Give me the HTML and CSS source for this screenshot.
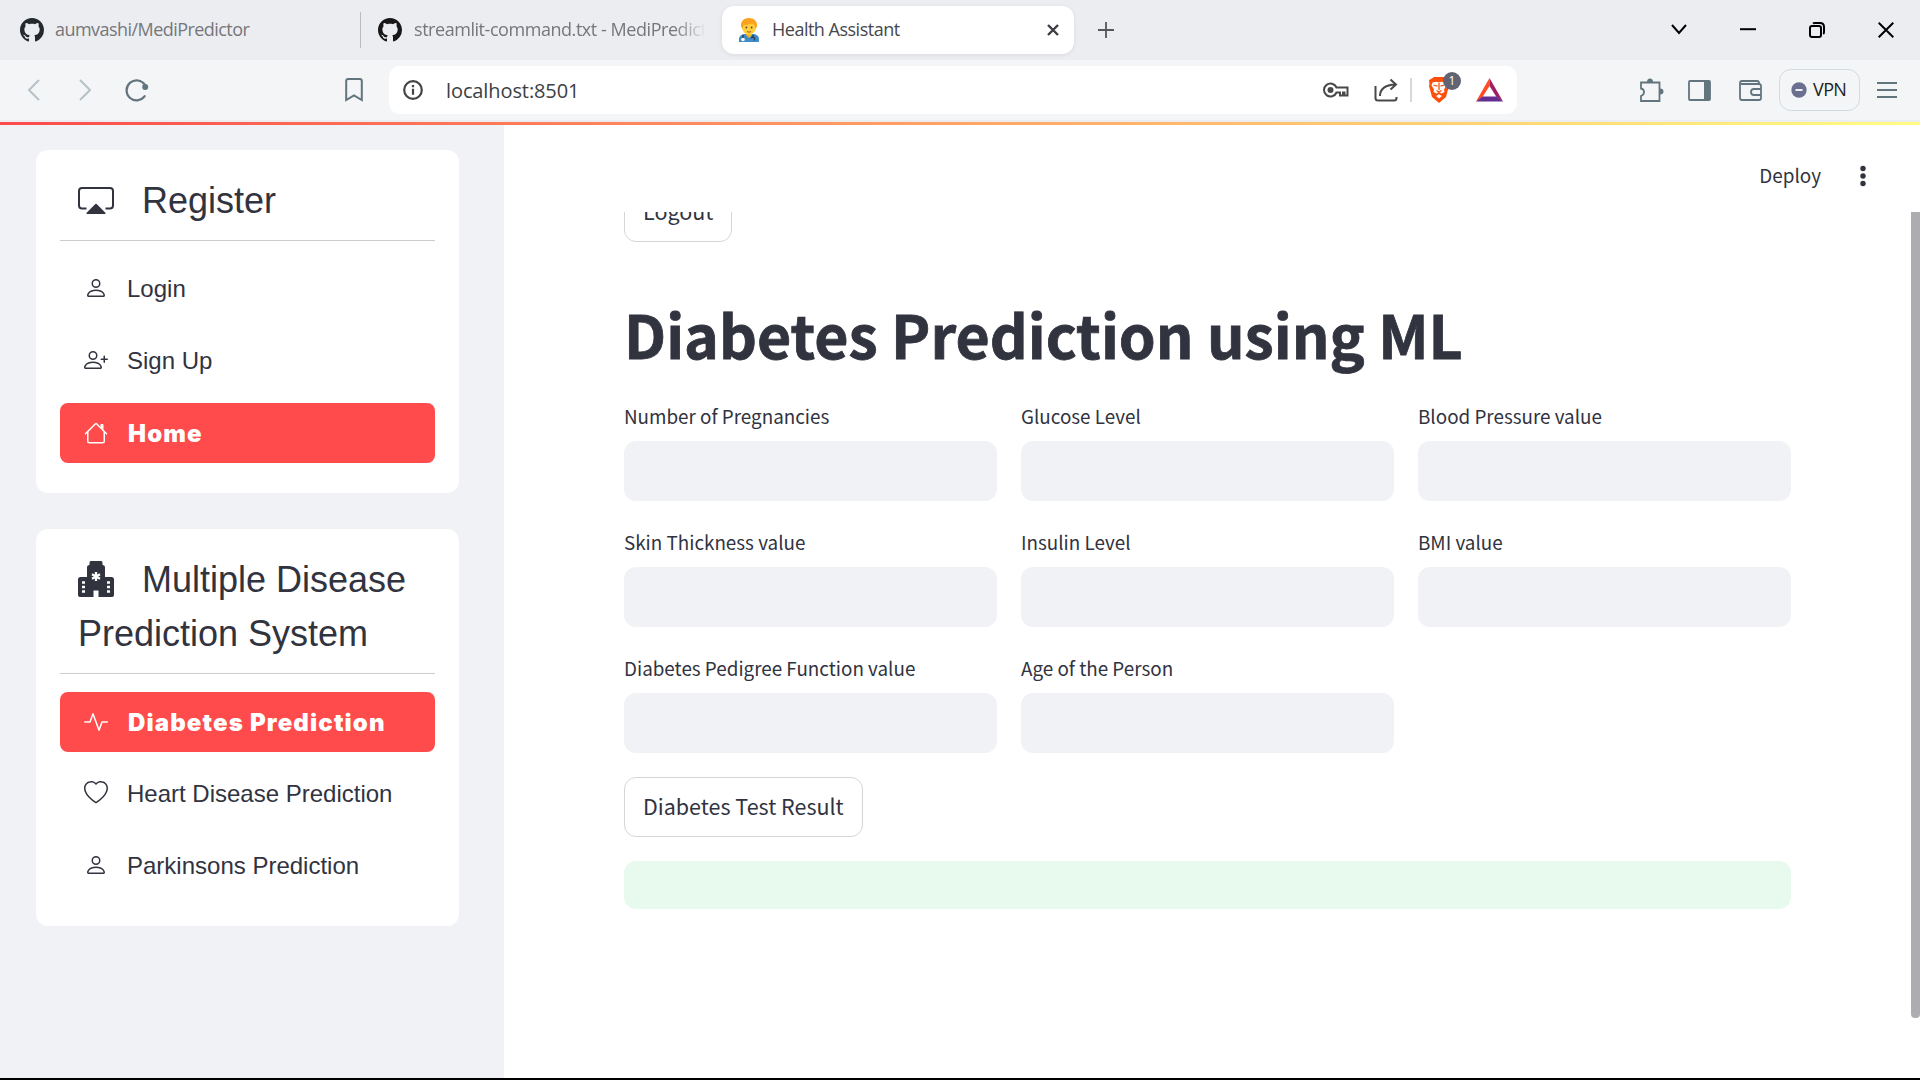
FILE: index.html
```html
<!DOCTYPE html>
<html lang="en">
<head>
<meta charset="utf-8">
<title>Health Assistant</title>
<link rel="stylesheet" href="styles.css">
</head>
<body>
<svg class="defs" width="0" height="0">
  <symbol id="github" viewBox="0 0 16 16"><path d="M8 0C3.58 0 0 3.58 0 8c0 3.54 2.29 6.53 5.47 7.59.4.07.55-.17.55-.38 0-.19-.01-.82-.01-1.49-2.01.37-2.53-.49-2.69-.94-.09-.23-.48-.94-.82-1.13-.28-.15-.68-.52-.01-.53.63-.01 1.08.58 1.23.82.72 1.21 1.87.87 2.33.66.07-.52.28-.87.51-1.07-1.78-.2-3.64-.89-3.64-3.95 0-.87.31-1.59.82-2.15-.08-.2-.36-1.02.08-2.12 0 0 .67-.21 2.2.82.64-.18 1.32-.27 2-.27s1.36.09 2 .27c1.53-1.04 2.2-.82 2.2-.82.44 1.1.16 1.92.08 2.12.51.56.82 1.27.82 2.15 0 3.07-1.87 3.75-3.65 3.95.29.25.54.73.54 1.48 0 1.07-.01 1.93-.01 2.2 0 .21.15.46.55.38A8.01 8.01 0 0 0 16 8c0-4.42-3.58-8-8-8z"/></symbol>
  <symbol id="person" viewBox="0 0 16 16"><path d="M8 8a3 3 0 1 0 0-6 3 3 0 0 0 0 6Zm2-3a2 2 0 1 1-4 0 2 2 0 0 1 4 0Zm4 8c0 1-1 1-1 1H3s-1 0-1-1 1-4 6-4 6 3 6 4Zm-1-.004c-.001-.246-.154-.986-.832-1.664C11.516 10.68 10.289 10 8 10c-2.29 0-3.516.68-4.168 1.332-.678.678-.83 1.418-.832 1.664h10Z"/></symbol>
</svg>

<div class="tabstrip">
  <div class="tab tab-first"><svg class="favicon"><use href="#github"/></svg><span class="tab-label label-repo">aumvashi/MediPredictor</span></div>
  <div class="tab tab-second"><svg class="favicon"><use href="#github"/></svg><span class="tab-label faded">streamlit-command.txt - MediPredict</span></div>
  <div class="tab tab-active">
    <svg class="doctor" viewBox="0 0 20 24">
      <path d="M0 24v-3c0-3 3-5 6-5h8c3 0 6 2 6 5v3z" fill="#3f8ccb"/>
      <path d="M7 14h6v3l-3 3-3-3z" fill="#f2b824"/>
      <ellipse cx="10" cy="9.500" rx="7" ry="7" fill="#ffcf3b"/>
      <path d="M2 8.500C1.500 3 5 0 10 0s8.500 3 8 8.500L16.500 11c0-3-1-4.500-3.500-5.500C10 7 6 6.500 4.500 7.500L3.500 11z" fill="#fca21f"/>
      <circle cx="7.400" cy="9.500" r=".9" fill="#5b4034"/><circle cx="12.600" cy="9.500" r=".9" fill="#5b4034"/>
      <path d="M8 13.500q2 1.500 4 0" stroke="#a8532c" fill="none"/>
      <path d="M4 17v4M12.500 20.500c0-2 3-2 3 0v2M14 17v2" stroke="#31445a" stroke-width="1.600" fill="none"/><circle cx="4" cy="21.500" r="1.800" fill="#fff"/>
    </svg>
    <span class="tab-label">Health Assistant</span>
    <svg class="tab-close" viewBox="0 0 12 12"><path d="M1 1l10 10M11 1L1 11"/></svg>
  </div>
  <svg class="new-tab" viewBox="0 0 16 16"><path d="M8 0v16M0 8h16"/></svg>
  <div class="window-controls">
    <svg viewBox="0 0 16 16"><path d="M1 3l7 8 7-8"/></svg>
    <svg viewBox="0 0 16 16"><path d="M0 7.200h16"/></svg>
    <svg viewBox="0 0 16 16"><rect x="1" y="4" width="11" height="11" rx="2"/><path d="M4 1.500Q4.500 1 6 1h5q4 0 4 4v5q0 1.500-.8 2"/></svg>
    <svg viewBox="0 0 16 16"><path d="M.7.700l14.600 14.600M15.300.700L.7 15.300"/></svg>
  </div>
</div>

<div class="toolbar">
  <div class="nav">
    <svg class="arrow" viewBox="0 0 12 22"><path d="M11 1L1 11l10 10"/></svg>
    <svg class="arrow" viewBox="0 0 12 22"><path d="M1 1l10 10L1 21"/></svg>
    <svg class="reload" viewBox="0 0 24 24"><path d="M19.700 18.200A10 10 0 1 1 20 7"/><circle cx="20.200" cy="9" r="3"/></svg>
  </div>
  <svg class="bookmark" viewBox="0 0 18 24"><path d="M1.200 22V3q0-2 2-2h11.600q2 0 2 2v19L9 17.500z"/></svg>
  <div class="urlbar">
    <svg class="info" viewBox="0 0 20 20"><circle cx="10" cy="10" r="8.800"/><path d="M10 8.800v6M10 5v2.200"/></svg>
    <span class="url">localhost:8501</span>
    <svg class="key" viewBox="0 0 26 16"><path d="M13.500 5.500A6.500 6.500 0 1 0 13.500 10.500H17V13.500H20V10.500H21.500V13.500H24.500V5.500z"/><circle cx="7.500" cy="8" r="3"/></svg>
    <svg class="share" viewBox="0 0 24 24"><path d="M1.500 8v12q0 2.500 2.500 2.500h16q2.500 0 2.500-2.500v-1M6 18C6 11 10 7 21.500 6.500M16.500 1.500l5.500 5-5.500 5"/></svg>
    <i class="url-sep"></i>
    <div class="brave">
      <svg viewBox="0 0 24 28"><path d="M7 1h10l3 2 2 1-.5 4 .5 2-3 11-7 6-7-6L2 10l.5-2L2 4l2-1z" fill="#fb4f0b"/><path d="M5.500 6.500l4-.8 2.500.8 2.500-.8 4 .8 1 3-2.500 4 .5 2.500-3 1.500-2.500-1.500-2.500 1.500-3-1.500.5-2.500-2.500-4zM9 20l3-1.800 3 1.800-3 2.500z" fill="#fff"/><path d="M6.500 9l4 1.200M17.500 9l-4 1.200M12 7v7M9.500 14.500l2.500 1.500 2.500-1.500" stroke="#fb4f0b" stroke-width="1.300" fill="none"/></svg>
      <span class="badge">1</span>
    </div>
    <svg class="bat" viewBox="0 0 27 24"><path d="M13.500 0v8L6.500 19 0 23.500z" fill="#ff4b24"/><path d="M13.500 0v8l7 11 6.500 4.500z" fill="#9e1f63"/><path d="M0 23.500L6.500 18.500h14l6.500 5z" fill="#662d91"/></svg>
  </div>
  <div class="tools">
    <svg class="puzzle" viewBox="0 0 25 25"><path d="M2 4.500h18.500V23H2v-5q3-1 3-4t-3-3.500z"/><path class="solid" d="M8 4a3 3.500 0 0 1 6 0zM21 10.500a3.500 3 0 0 1 0 6z"/></svg>
    <svg class="panel" viewBox="0 0 24 21"><rect x="1" y="1" width="21" height="19" rx="1"/><path class="solid" d="M16 1h6v19h-6z"/></svg>
    <svg class="wallet" viewBox="0 0 24 21"><path d="M20 4V3q0-2-2-2H3Q1 1 1 3v15q0 2 2 2h17q2 0 2-2V6q0-2-2-2H2M22 9h-7q-3 0-3 3t3 3h7"/></svg>
    <div class="vpn"><svg viewBox="0 0 16 16"><circle cx="8" cy="8" r="7.700"/><path d="M4.500 8h7"/></svg><span>VPN</span></div>
    <svg class="menu" viewBox="0 0 20 16"><path d="M0 1h20M0 8h20M0 15h20"/></svg>
  </div>
</div>
<div class="decoration"></div>

<div class="app">
  <aside class="sidebar">
    <nav class="card">
      <h2 class="card-title"><svg class="title-icon" viewBox="0 0 36 36"><path d="M8.500 27.500H4q-3 0-3-3V10q0-3 3-3h28q3 0 3 3v14.500q0 3-3 3h-4.500" fill="none" stroke="currentColor" stroke-width="2"/><path d="M18.900 23.200l8.500 8.500q.8 1.300-.8 1.300H9.400q-1.600 0-.8-1.300l8.500-8.500q.9-.8 1.800 0z"/></svg>Register</h2>
      <a class="item"><svg><use href="#person"/></svg>Login</a>
      <a class="item"><svg viewBox="0 0 16 16"><path d="M6 8a3 3 0 1 0 0-6 3 3 0 0 0 0 6zm2-3a2 2 0 1 1-4 0 2 2 0 0 1 4 0zm4 8c0 1-1 1-1 1H1s-1 0-1-1 1-4 6-4 6 3 6 4zm-1-.004c-.001-.246-.154-.986-.832-1.664C9.516 10.680 8.289 10 6 10c-2.290 0-3.516.680-4.168 1.332-.678.678-.830 1.418-.832 1.664h10z"/><path d="M13.500 5a.5.5 0 0 1 .5.5V7h1.500a.5.5 0 0 1 0 1H14v1.500a.5.5 0 0 1-1 0V8h-1.500a.5.5 0 0 1 0-1H13V5.500a.5.5 0 0 1 .5-.5z"/></svg>Sign Up</a>
      <a class="item active"><svg viewBox="0 0 16 16"><path d="M2 13.500V7h1v6.500a.5.5 0 0 0 .5.5h9a.5.5 0 0 0 .5-.5V7h1v6.500a1.500 1.500 0 0 1-1.500 1.500h-9A1.500 1.500 0 0 1 2 13.500zm11-11V6l-2-2V2.500a.5.5 0 0 1 .5-.5h1a.5.5 0 0 1 .5.5z"/><path d="M7.293 1.500a1 1 0 0 1 1.414 0l6.647 6.646a.5.5 0 0 1-.708.708L8 2.207 1.354 8.854a.5.5 0 1 1-.708-.708L7.293 1.500z"/></svg><span>Home</span></a>
    </nav>
    <nav class="card">
      <h2 class="card-title"><svg class="title-icon hospital" viewBox="0 0 36 36"><path fill-rule="evenodd" d="M13 0h10q1.500 0 1.500 1.500V4q2.500 0 2.500 2.500V16h6.500q2.500 0 2.500 2.500V34q0 2-2 2H20.500v-6.500h-5V36H2q-2 0-2-2V18.500Q0 16 2.500 16H9V6.500Q9 4 11.500 4V1.500Q11.500 0 13 0zM4 20.300v2.500h3v-2.500zm0 4.500v2.500h3v-2.500zm0 4.500v2.500h3v-2.500zm25-9v2.500h3v-2.500zm0 4.500v2.500h3v-2.500zm0 4.500v2.500h3v-2.500z"/><path d="M18 11v9M14 13.200l8 4.600M22 13.200l-8 4.600" stroke="#fff" stroke-width="2.300"/></svg>Multiple Disease Prediction System</h2>
      <a class="item active"><svg viewBox="0 0 16 16"><path d="M6 2a.5.5 0 0 1 .47.33L10 12.036l1.530-4.208A.5.5 0 0 1 12 7.500h3.500a.5.5 0 0 1 0 1h-3.150l-1.880 5.170a.5.5 0 0 1-.94 0L6 3.964 4.470 8.171A.5.5 0 0 1 4 8.500H.5a.5.5 0 0 1 0-1h3.150l1.880-5.170A.5.5 0 0 1 6 2Z"/></svg><span>Diabetes Prediction</span></a>
      <a class="item"><svg viewBox="0 0 16 16"><path d="m8 2.748-.717-.737C5.600.281 2.514.878 1.400 3.053c-.523 1.023-.641 2.500.314 4.385.920 1.815 2.834 3.989 6.286 6.357 3.452-2.368 5.365-4.542 6.286-6.357.955-1.886.838-3.362.314-4.385C13.486.878 10.400.280 8.717 2.010L8 2.748zM8 15C-7.333 4.868 3.279-3.040 7.824 1.143c.060.055.119.112.176.171a3.120 3.120 0 0 1 .176-.170C12.720-3.042 23.333 4.867 8 15z"/></svg>Heart Disease Prediction</a>
      <a class="item"><svg><use href="#person"/></svg>Parkinsons Prediction</a>
    </nav>
  </aside>

  <main class="main">
    <header class="header">
      <span class="deploy">Deploy</span>
      <svg class="dots" viewBox="0 0 6 22"><circle cx="3" cy="3.500" r="2.700"/><circle cx="3" cy="11" r="2.700"/><circle cx="3" cy="18.500" r="2.700"/></svg>
    </header>
    <div class="scroll">
      <div class="block">
        <button class="button logout">Logout</button>
        <h1>Diabetes Prediction using ML</h1>
        <div class="grid">
          <label>Number of Pregnancies<input type="text"></label>
          <label>Glucose Level<input type="text"></label>
          <label>Blood Pressure value<input type="text"></label>
          <label>Skin Thickness value<input type="text"></label>
          <label>Insulin Level<input type="text"></label>
          <label>BMI value<input type="text"></label>
          <label>Diabetes Pedigree Function value<input type="text"></label>
          <label>Age of the Person<input type="text"></label>
        </div>
        <button class="button">Diabetes Test Result</button>
        <div class="success"></div>
      </div>
      <div class="scrollbar"></div>
    </div>
  </main>
</div>
</body>
</html>
```
FILE: styles.css
```css
* { box-sizing: border-box; }
body {
  margin: 0;
  width: 1920px;
  height: 1080px;
  overflow: hidden;
  display: flex;
  flex-direction: column;
  background: #fff;
  color: #31333f;
  font-family: "Noto Sans CJK SC", "Noto Sans", sans-serif;
}
svg { display: block; flex: none; }
.defs { position: absolute; }

/* Browser tabs */
.tabstrip {
  height: 60px;
  flex: none;
  display: flex;
  align-items: center;
  background: #ecedf1;
  font-family: "Open Sans", sans-serif;
  font-size: 18px;
  color: #75777b;
}
.tab { display: flex; align-items: center; }
.tab-first { width: 361px; height: 36px; padding-left: 20px; border-right: 1px solid #b9bbbd; }
.tab-second { width: 361px; padding-left: 17px; }
.favicon { width: 24px; height: 24px; margin-right: 12px; fill: #24292e; }
.tab-second .favicon { fill: #191717; }
.tab-label { white-space: nowrap; letter-spacing: -0.5px; line-height: 24px; margin-top: -2px; }
.label-repo { margin-left: -1px; letter-spacing: -0.55px; }
.faded {
  width: 292px;
  overflow: hidden;
  letter-spacing: -0.45px;
  -webkit-mask-image: linear-gradient(90deg, #000 260px, transparent 292px);
  mask-image: linear-gradient(90deg, #000 260px, transparent 292px);
}
.tab-active {
  width: 352px;
  height: 48px;
  padding: 0 15px 0 17px;
  border-radius: 12px;
  background: #fff;
  box-shadow: 0 1px 4px rgba(0, 0, 0, .08);
  color: #46484d;
}
.doctor { width: 20px; height: 24px; margin-right: 13px; }
.tab-close { width: 12px; height: 12px; margin-left: auto; stroke: #3b3e44; stroke-width: 2.4; }
.new-tab { width: 16px; height: 16px; margin-left: 24px; stroke: #54565a; stroke-width: 1.8; }
.window-controls { display: flex; gap: 53px; margin-left: auto; padding-right: 26px; }
.window-controls svg { width: 16px; height: 16px; fill: none; stroke: #000; stroke-width: 2; }

/* Browser toolbar */
.toolbar {
  height: 62px;
  flex: none;
  display: flex;
  align-items: center;
  padding: 0 23px 0 28px;
  background: #f3f5f7;
  border-bottom: 2px solid #ebedf0;
}
.nav { display: flex; align-items: center; width: 317px; gap: 39px; }
.arrow { width: 12px; height: 22px; fill: none; stroke: #b7c1c6; stroke-width: 2; }
.reload { width: 24px; height: 24px; margin-left: -5px; fill: none; stroke: #62757e; stroke-width: 2.2; stroke-linecap: round; }
.reload circle { fill: #62757e; stroke: none; }
.bookmark { width: 18px; height: 24px; fill: none; stroke: #62757e; stroke-width: 2; }
.urlbar {
  width: 1128px;
  height: 48px;
  margin-left: 26px;
  padding: 0 14px;
  display: flex;
  align-items: center;
  border-radius: 11px;
  background: #fff;
}
.info { width: 20px; height: 20px; fill: none; stroke: #444; stroke-width: 2.2; }
.url { margin: 1px auto 0 23px; font-family: "Open Sans", sans-serif; font-size: 20px; line-height: 26px; letter-spacing: -0.1px; color: #3c4043; }
.key { width: 26px; height: 16px; margin-right: 25px; fill: none; stroke: #484848; stroke-width: 2; }
.key circle { fill: #484848; stroke: none; }
.share { width: 24px; height: 24px; margin-right: 12px; fill: none; stroke: #484848; stroke-width: 2; }
.url-sep { width: 2px; height: 24px; margin-right: 15px; background: #d5d7d9; }
.brave { position: relative; width: 24px; margin-right: 25px; }
.brave svg { width: 24px; height: 28px; }
.badge {
  position: absolute;
  left: 16px;
  top: -4px;
  width: 18px;
  height: 18px;
  border-radius: 50%;
  background: #626473;
  color: #fff;
  font: 12px/18px "Open Sans", sans-serif;
  text-align: center;
}
.bat { width: 27px; height: 24px; }
.tools { display: flex; align-items: center; margin-left: auto; }
.tools > svg { fill: none; stroke: #62757e; stroke-width: 1.8; }
.tools .solid { fill: #62757e; stroke: none; }
.puzzle { width: 25px; height: 25px; margin-right: 24px; }
.panel { width: 24px; height: 21px; margin-right: 27px; }
.wallet { width: 24px; height: 21px; margin-right: 16px; }
.vpn {
  width: 81px;
  height: 42px;
  margin-right: 17px;
  padding-left: 11px;
  display: flex;
  align-items: center;
  gap: 6px;
  border: 1.5px solid #d2dbe0;
  border-radius: 12px;
  font: 18px/24px "Open Sans", sans-serif;
  letter-spacing: -0.6px;
  color: #222;
}
.vpn svg { width: 16px; height: 16px; fill: #6b7091; }
.vpn path { stroke: #fff; stroke-width: 1.8; }
.vpn span { margin-top: -2px; }
.menu { width: 20px; height: 16px; }

.decoration { height: 3px; flex: none; background: linear-gradient(90deg, #ff4b4b, #fffd80); }

/* Application */
.app { flex: 1; display: flex; min-height: 0; border-bottom: 2px solid #000; }
.sidebar {
  width: 504px;
  padding: 25px 45px 0 36px;
  display: flex;
  flex-direction: column;
  gap: 36px;
  background: #f0f2f6;
  font-family: "Liberation Sans", Arial, sans-serif;
}
.card { padding: 24px 24px 18px; border-radius: 12px; background: #fff; }
.card-title {
  margin: 0 0 18px;
  padding: 0 18px 12px;
  border-bottom: 1px solid #ccc;
  font-size: 36px;
  font-weight: 400;
  line-height: 54px;
}
.title-icon { display: inline-block; width: 36px; height: 36px; margin: -9px 28px 0 0; vertical-align: -4px; fill: currentColor; }
.hospital { vertical-align: -5px; }
.item { display: flex; align-items: center; height: 60px; margin-bottom: 12px; padding-left: 24px; border-radius: 8px; font-size: 24px; line-height: 36px; }
.item svg { width: 24px; height: 24px; margin: -2px 19px 0 0; fill: currentColor; }
.item.active { background: #ff4b4b; color: #fff; font-family: Inter, "Liberation Sans", sans-serif; font-size: 24px; font-weight: 900; letter-spacing: 1.15px; }
.item.active svg { margin: 0 20px 0 0; }
.item.active span { margin-top: 2px; }

.main { flex: 1; display: flex; flex-direction: column; min-width: 0; }
.header { height: 87px; flex: none; display: flex; align-items: center; justify-content: flex-end; gap: 39px; padding: 15px 54px 0 0; }
.deploy { margin-top: -2px; font-size: 18.9px; line-height: 30px; }
.dots { width: 6px; height: 22px; fill: #31333f; }
.scroll { flex: 1; min-height: 0; overflow: hidden; display: flex; justify-content: space-between; }
.block { width: 1287px; margin-top: -30px; padding: 0 0 0 120px; }
.button {
  display: block;
  height: 60px;
  padding: 0 18px 4px;
  border: 1px solid #d6d6d9;
  border-radius: 12px;
  background: #fff;
  color: #31333f;
  font-family: inherit;
  font-size: 21.5px;
}
h1 { margin: 0; height: 157px; padding-top: 52px; font-size: 59px; font-weight: 700; line-height: 79px; white-space: nowrap; -webkit-text-stroke: 0.8px #31333f; }
.grid { display: grid; grid-template-columns: repeat(3, 1fr); gap: 24px; margin-bottom: 24px; }
label { display: block; font-size: 18.84px; line-height: 34px; }
input { display: block; width: 100%; height: 60px; margin-top: 8px; padding: 0 18px; border: 0; border-radius: 12px; background: #f0f2f6; }
.success { height: 48px; margin-top: 24px; border-radius: 12px; background: #e8f9ee; }
.scrollbar { width: 9px; height: 806px; border-radius: 0 0 4px 4px; background: #adacb1; }
```
